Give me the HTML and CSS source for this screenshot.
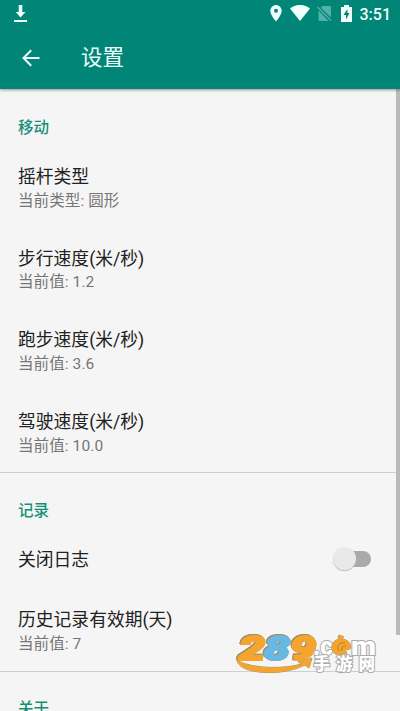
FILE: index.html
```html
<!DOCTYPE html>
<html lang="zh-CN">
<head>
<meta charset="utf-8">
<title>设置</title>
<link rel="stylesheet" href="styles.css">
</head>
<body>
<div class="screen">
  <header class="app-bar">
    <div class="status">
      <svg class="download" width="14" height="18" viewBox="0 0 14 18"><path d="M4.700 0h3.600v7h3.200L6.500 12.500 1.700 7h3zM0 15h13v2H0z"/></svg>
      <div class="indicators">
        <svg width="12" height="17" viewBox="0 0 12 17"><path fill-rule="evenodd" d="M6 0a5.700 5.700 0 0 0-5.700 5.800C.3 10 6 16.500 6 16.500s5.700-6.500 5.700-10.700A5.700 5.700 0 0 0 6 0zm0 3.700a2 2 0 1 1 0 4 2 2 0 0 1 0-4z"/></svg>
        <svg class="wifi" width="20" height="16" viewBox="0 0 20 16"><path d="M0 3.500C6-1.200 14-1.200 20 3.500L10 16z"/></svg>
        <svg class="sim" width="15" height="17" viewBox="0 0 15 17"><path d="M5.500 1H13q1 0 1 1v10.500L3.800 2.700zM1.500 5.500 11.500 16h-9q-1 0-1-1z"/><path class="slash" d="M.5 2 14 15.500"/></svg>
        <svg class="battery" width="11" height="17" viewBox="0 0 11 17"><path fill-rule="evenodd" d="M3 0h5v2h3v15H0V2h3zm3.500 4L2.500 10H5v4.500L8.500 8h-2z"/></svg>
        <span class="clock">3:51</span>
      </div>
    </div>
    <div class="toolbar">
      <svg class="back" width="18" height="18" viewBox="0 0 18 18"><path d="M17.500 9H1.800M9.200 1.200 1.500 9l7.700 7.800"/></svg>
      <h1>设置</h1>
    </div>
  </header>
  <main class="content">
    <section>
      <h2>移动</h2>
      <div class="item"><h3>摇杆类型</h3><p>当前类型: 圆形</p></div>
      <div class="item"><h3>步行速度(米/秒)</h3><p>当前值: 1.2</p></div>
      <div class="item"><h3>跑步速度(米/秒)</h3><p>当前值: 3.6</p></div>
      <div class="item"><h3>驾驶速度(米/秒)</h3><p>当前值: 10.0</p></div>
    </section>
    <section class="records">
      <h2>记录</h2>
      <div class="item toggle-row"><h3>关闭日志</h3><span class="switch"></span></div>
      <div class="item"><h3>历史记录有效期(天)</h3><p>当前值: 7</p></div>
    </section>
    <section class="about">
      <h2>关于</h2>
    </section>
    <div class="scrollbar"></div>
  </main>
  <svg class="watermark" width="150" height="46" viewBox="0 0 150 46">
    <path class="orange" d="M3 24C1 33 10 38 25 40c18 2 33-1 46-7l4 3 3-10-14 4 4 2C50 37 20 37 4 29z"/>
    <g class="numerals">
      <text class="orange" x="5" y="28" textLength="26" lengthAdjust="spacingAndGlyphs">2</text>
      <text class="orange" x="56" y="28" textLength="26" lengthAdjust="spacingAndGlyphs">9</text>
      <text class="blue" x="30" y="28" textLength="26" lengthAdjust="spacingAndGlyphs">8</text>
    </g>
    <text class="domain" x="79" y="23" textLength="20" lengthAdjust="spacingAndGlyphs">.c</text>
    <text class="domain" x="117" y="23" textLength="25" lengthAdjust="spacingAndGlyphs">m</text>
    <path class="orange" d="M107 7c-7 0-10 5-9 10 1 6 9 8 15 4l-2-3 5-1c2-5-2-10-9-10zM109 8l-5-2 1-3 5 2"/>
    <path class="curl" d="M111 11c-6-1-9 3-6 8M112 14c-4 0-5 2-4 5"/>
    <g class="site">
      <text x="79.500" y="37.500">手</text>
      <text x="102" y="37.500">游</text>
      <text x="124.500" y="37.500">网</text>
    </g>
  </svg>
</div>
</body>
</html>
```
FILE: styles.css
```css
* { box-sizing: border-box; }
body { margin: 0; font-family: Roboto, "Noto Sans CJK SC", sans-serif; }
h1, h2, h3, p { margin: 0; font-weight: 400; }
.screen { position: relative; display: flex; flex-direction: column; width: 400px; height: 711px; overflow: hidden; background: #f5f5f5; }
.app-bar { flex: none; height: 89px; background: #008577; color: #effffd; box-shadow: 0 1px 3px rgba(0,0,0,.4); z-index: 1; }
.app-bar svg { fill: #effffd; }
.status { display: flex; justify-content: space-between; height: 27px; padding: 5px 9px 0 14px; }
.indicators { display: flex; align-items: flex-start; }
.wifi { margin-left: 8px; }
.sim { margin-left: 7px; opacity: .35; }
.app-bar .slash { fill: none; stroke: #effffd; stroke-width: 1.5; }
.battery { margin-left: 9px; }
.clock { margin-left: 8px; font-size: 16px; line-height: 19px; font-weight: 500; }
.toolbar { display: flex; align-items: center; height: 62px; padding-left: 22px; }
.app-bar .back { fill: none; stroke: #effffd; stroke-width: 2; }
h1 { margin-left: 41px; font-size: 21.5px; line-height: 30px; }
.content { position: relative; flex: 1; min-height: 0; overflow: hidden; }
section { padding-top: 27px; height: 384px; border-bottom: 1px solid #cfcfcf; }
.records { height: 199px; padding-top: 26px; }
.about { padding-top: 25px; }
h2 { padding-left: 18px; height: 24px; font-size: 15.5px; line-height: 24px; font-weight: 500; color: #159076; }
.item { height: 81.7px; padding: 24px 18px 0; }
h3 { font-size: 17.8px; line-height: 26px; color: #212121; }
p { margin-top: -.5px; font-size: 15.5px; line-height: 22px; color: #757575; letter-spacing: .1px; }
.toggle-row { display: flex; align-items: flex-start; justify-content: space-between; height: 60px; }
.switch { position: relative; width: 35px; height: 16px; margin: 4px 11px 0 0; border-radius: 8px; background: linear-gradient(90deg, transparent 10px, #aaa 10px); }
.switch::before { content: ""; position: absolute; left: -3px; top: -4px; width: 23px; height: 23px; border-radius: 50%; background: #e9e9e9; box-shadow: 0 1px 1px #bbb; }
.scrollbar { position: absolute; right: 0; top: 0; width: 4px; height: 546px; background: #bababa; }
.watermark { position: absolute; left: 234px; top: 632px; }
.watermark path, .watermark text { stroke: #a38c6b; stroke-width: 1; paint-order: stroke; }
.orange { fill: #f5a52d; }
.blue { fill: #67b8e3; }
.numerals { font: italic 900 34px Roboto, sans-serif; }
.watermark .numerals text { stroke: #f5a52d; stroke-width: 2; filter: drop-shadow(.6px .6px 0 #a38c6b) drop-shadow(-.6px -.6px 0 #a38c6b); }
.watermark .numerals .blue { stroke: #67b8e3; }
.watermark .domain { font: 900 26px Roboto, sans-serif; fill: #fff; stroke: #aaa; stroke-width: 2; }
.site { font: 900 16.5px "Noto Sans CJK SC", sans-serif; }
.watermark .site text { fill: #fff; stroke: #aaa; stroke-width: 2; }
.watermark .curl { fill: none; stroke: #b77d2b; }
```
